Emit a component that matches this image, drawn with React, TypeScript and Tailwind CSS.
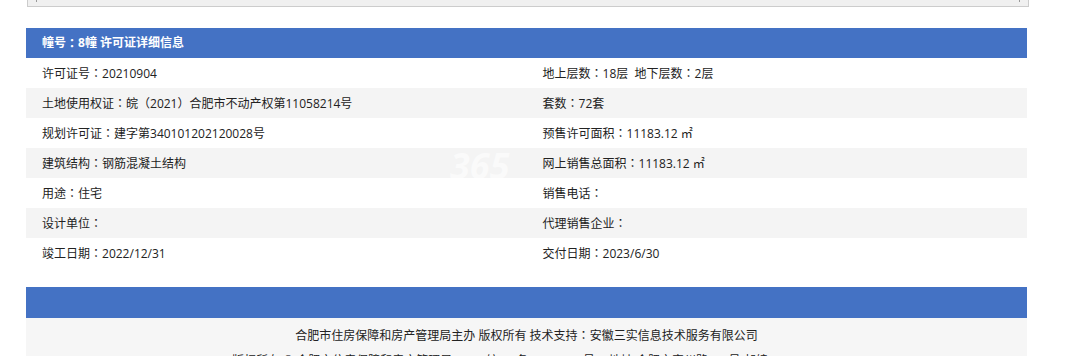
import React from "react";

const rows: [string, string][] = [
  ["许可证号：20210904", "地上层数：18层  地下层数：2层"],
  ["土地使用权证：皖（2021）合肥市不动产权第11058214号", "套数：72套"],
  ["规划许可证：建字第340101202120028号", "预售许可面积：11183.12 ㎡"],
  ["建筑结构：钢筋混凝土结构", "网上销售总面积：11183.12 ㎡"],
  ["用途：住宅", "销售电话："],
  ["设计单位：", "代理销售企业："],
  ["竣工日期：2022/12/31", "交付日期：2023/6/30"],
];

function T({ s }: { s: string }) {
  const parts = s.split("：");
  return (
    <>
      {parts.map((p, i) => (
        <React.Fragment key={i}>
          {p}
          {i < parts.length - 1 && (
            <span style={{ fontFamily: '"Noto Sans CJK TC", sans-serif' }}>：</span>
          )}
        </React.Fragment>
      ))}
    </>
  );
}

export default function App() {
  return (
    <div
      className="w-[1078px] h-[356px] overflow-hidden bg-white text-[12px] text-[#222]"
      style={{ fontFamily: '"Open Sans", "Noto Sans CJK SC", sans-serif' }}
    >
      <div className="ml-[27px] w-[1002px] h-[7px] bg-[#f0f0f0] border-x border-b border-[#cccccc] flex justify-between px-[8px]">
        <div className="w-px h-[2px] bg-[#999]" />
        <div className="w-px h-[2px] bg-[#999]" />
      </div>
      <div className="ml-[26px] w-[1001px] mt-[21px]">
        <div className="h-[30px] bg-[#4472c4] flex items-center pl-[16px] text-white font-bold">
          <T s="幢号：8幢 许可证详细信息" />
        </div>
        <div className="relative">
          {rows.map(([l, r], i) => (
            <div
              key={i}
              className={`grid grid-cols-2 h-[30px] items-center ${i % 2 === 1 ? "bg-[#f4f4f4]" : "bg-white"}`}
            >
              <div className="pl-[16px] whitespace-pre">
                <T s={l} />
              </div>
              <div className="pl-[16px] whitespace-pre">
                <T s={r} />
              </div>
            </div>
          ))}
          <div className="absolute left-[424px] top-[90px] w-[90px] h-[30px] overflow-hidden pointer-events-none">
            <div className="text-[36px] leading-[44px] font-bold italic text-white opacity-60 -mt-[4px]">
              365
            </div>
          </div>
        </div>
        <div className="h-[19px]" />
        <div className="h-[31px] bg-[#4472c4]" />
        <div className="bg-[#f6f6f6] pt-[5px] pb-[10px] text-center text-[#222] leading-[24px]">
          <div>
            <T s="合肥市住房保障和房产管理局主办 版权所有 技术支持：安徽三实信息技术服务有限公司" />
          </div>
          <div>
            <T s="版权所有 © 合肥市住房保障和房产管理局 2005 皖ICP备11006174号-1 地址 合肥市宿州路252号 邮编：230001" />
          </div>
        </div>
      </div>
    </div>
  );
}
